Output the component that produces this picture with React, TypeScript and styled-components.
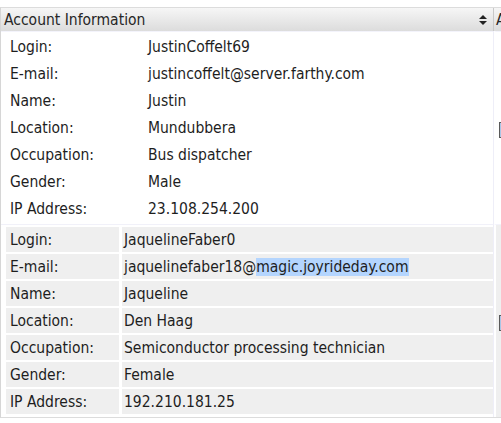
import React from "react";
import styled, { createGlobalStyle } from "styled-components";

const GlobalStyle = createGlobalStyle`
  html, body { margin: 0; padding: 0; background: #ffffff; }
  body {
    font-family: "DejaVu Sans Condensed", "DejaVu Sans", Verdana, sans-serif;
    color: #1e1e1e;
    overflow: hidden;
  }
  ::selection { background: #b4d5fe; }
`;

const Page = styled.div`
  width: 501px;
  height: 423px;
  padding-top: 7px;
  box-sizing: border-box;
  overflow: hidden;
`;

const Table = styled.div`
  display: grid;
  grid-template-columns: 493px 12px;
  border-top: 1px solid #dcdcdc;
  border-left: 1px solid #d6d6d6;
  border-bottom: 1px solid #dcdcdc;
  width: 520px;
`;

const HeaderCell = styled.div<{ $side?: boolean }>`
  height: 23px;
  box-sizing: border-box;
  display: flex;
  align-items: center;
  padding-left: ${(p) => (p.$side ? "2px" : "3px")};
  padding-right: 6px;
  background: linear-gradient(#f6f6f6, #dcdcdc);
  border-right: 1px solid #c8c8c8;
  font-size: 15.5px;
  color: #262626;
  white-space: nowrap;
  overflow: hidden;
`;

const HeaderTitle = styled.span`
  flex: 1;
`;

const SortIcon = styled.svg`
  width: 8px;
  height: 10px;
  flex: none;
`;

const Record = styled.div<{ $alt?: boolean }>`
  padding: 2px 0 3px 5px;
  border-top: 1px solid ${(p) => (p.$alt ? "#f1f1f9" : "#f3f3fb")};
  border-right: 1px solid #eeeef8;
`;

const Fields = styled.div<{ $label: number; $alt?: boolean }>`
  display: grid;
  grid-template-columns: ${(p) => p.$label}px 1fr;
  grid-auto-rows: 25px;
  gap: 2px 3px;
  ${(p) => (p.$alt ? "& > div { background: #efefef; }" : "")}
`;

const Label = styled.div`
  display: flex;
  align-items: center;
  padding: 1px 0 0 4px;
  font-size: 15.5px;
  white-space: nowrap;
`;

const Value = styled.div<{ $pad: number }>`
  display: flex;
  align-items: center;
  padding: 1px 0 0 ${(p) => p.$pad}px;
  font-size: 15.5px;
  white-space: nowrap;
`;

const Selected = styled.span`
  background: #b4d5fe;
`;

const SideCell = styled.div<{ $alt?: boolean }>`
  padding: 90px 0 0 3px;
  background: ${(p) => (p.$alt ? "#efefef" : "#ffffff")};
  border-top: 1px solid #f3f3fb;
  border-left: 2px solid #ffffff;
`;

const EditBox = styled.div`
  width: 9px;
  height: 14px;
  border: 1px solid #5a5a5a;
  background: #a9c6e6;
`;

type Person = {
  login: string;
  email: React.ReactNode;
  name: string;
  location: string;
  occupation: string;
  gender: string;
  ip: string;
};

const people: Person[] = [
  {
    login: "JustinCoffelt69",
    email: "justincoffelt@server.farthy.com",
    name: "Justin",
    location: "Mundubbera",
    occupation: "Bus dispatcher",
    gender: "Male",
    ip: "23.108.254.200",
  },
  {
    login: "JaquelineFaber0",
    email: (
      <>
        jaquelinefaber18@<Selected>magic.joyrideday.com</Selected>
      </>
    ),
    name: "Jaqueline",
    location: "Den Haag",
    occupation: "Semiconductor processing technician",
    gender: "Female",
    ip: "192.210.181.25",
  },
];

const labels: [string, keyof Person][] = [
  ["Login:", "login"],
  ["E-mail:", "email"],
  ["Name:", "name"],
  ["Location:", "location"],
  ["Occupation:", "occupation"],
  ["Gender:", "gender"],
  ["IP Address:", "ip"],
];

export default function App() {
  return (
    <>
      <GlobalStyle />
      <Page>
        <Table>
          <HeaderCell>
            <HeaderTitle>Account Information</HeaderTitle>
            <SortIcon viewBox="0 0 8 10">
              <path d="M4 0 L8 4 L0 4 Z M0 6 L8 6 L4 10 Z" fill="#222" />
            </SortIcon>
          </HeaderCell>
          <HeaderCell $side>A</HeaderCell>
          {people.map((p, i) => {
            const alt = i === 1;
            return (
              <React.Fragment key={p.login}>
                <Record $alt={alt}>
                  <Fields $label={alt ? 113 : 136} $alt={alt}>
                    {labels.map(([l, k]) => (
                      <React.Fragment key={k}>
                        <Label>{l}</Label>
                        <Value $pad={alt ? 2 : 3}>{p[k]}</Value>
                      </React.Fragment>
                    ))}
                  </Fields>
                </Record>
                <SideCell $alt={alt}>
                  <EditBox />
                </SideCell>
              </React.Fragment>
            );
          })}
        </Table>
      </Page>
    </>
  );
}
